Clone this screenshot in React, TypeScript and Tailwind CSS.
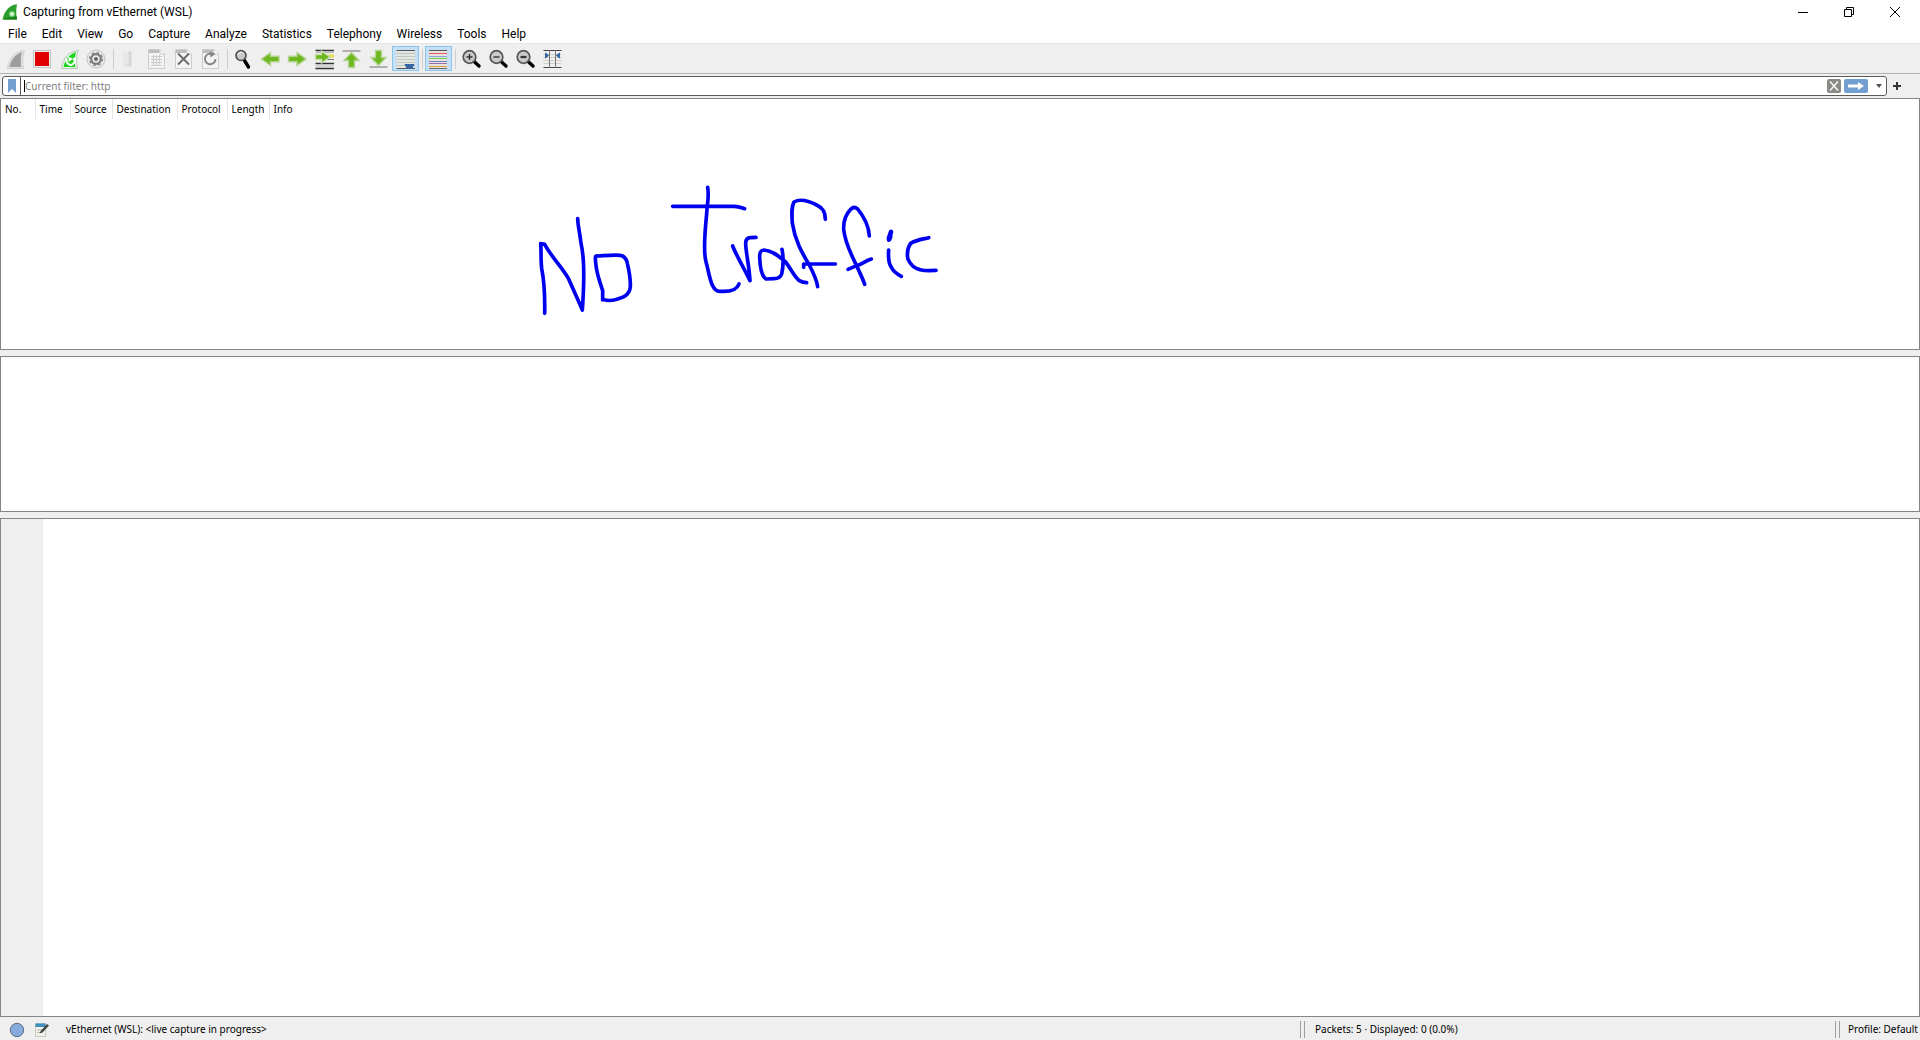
import React from "react";

const menus = ["File", "Edit", "View", "Go", "Capture", "Analyze", "Statistics", "Telephony", "Wireless", "Tools", "Help"];

const columns = [
  { name: "No.", width: "w-[34px]" },
  { name: "Time", width: "w-[35px]" },
  { name: "Source", width: "w-[42px]" },
  { name: "Destination", width: "w-[65px]" },
  { name: "Protocol", width: "w-[50px]" },
  { name: "Length", width: "w-[42px]" },
  { name: "Info", width: "" },
];

function Glyph({ children }: { children: React.ReactNode }) {
  return (
    <svg viewBox="0 0 27 25" className="h-[25px] w-[27px]" fill="none" aria-hidden="true">
      {children}
    </svg>
  );
}

function Fin({ outer, rim, inner }: { outer: string; rim: string; inner: string }) {
  return (
    <>
      <path d="M5.500 22.500C7 12 12.500 5.500 22.500 4.500C20 9.500 20.500 16 21.500 22.500Z" fill={outer} stroke={rim} />
      <path d="M7.500 21C9 13.500 13.500 8 20 6.300C18.500 11 18.500 16 19.300 21Z" fill={inner} />
    </>
  );
}

function Sheet({ children }: { children: React.ReactNode }) {
  return (
    <>
      <path d="M5.500 3.500H17L21.500 8V22.500H5.500Z" fill="#f4f4f4" stroke="#cccccc" />
      <path d="M6 4H16.500V7H6Z" fill="#bdbdbd" />
      <path d="M17 3.500V8H21.500" stroke="#cccccc" fill="#fff" />
      {children}
    </>
  );
}

function Lens({ children }: { children?: React.ReactNode }) {
  return (
    <>
      <path d="M15.500 15L21 20" stroke="#000" strokeWidth="3.400" strokeLinecap="round" />
      <circle cx="11.500" cy="11" r="6.300" fill="#c9c9c9" stroke="#555" strokeWidth="1.700" />
      {children}
    </>
  );
}

type Tool = { label: string; icon?: React.ReactNode; pressed?: boolean; disabled?: boolean };

const tools: (Tool | null)[] = [
  { label: "Start capture", disabled: true, icon: <Fin outer="#e2e2e2" rim="#d0d0d0" inner="#9c9c9c" /> },
  {
    label: "Stop capture",
    icon: (
      <>
        <rect x="4.500" y="4.500" width="17" height="17" fill="#efefef" stroke="#c4c4c4" />
        <rect x="6" y="6" width="14" height="14" fill="#e00000" />
      </>
    ),
  },
  {
    label: "Restart capture",
    icon: (
      <>
        <Fin outer="#e6f8e6" rim="#b4c8b4" inner="#1fd41f" />
        <path d="M11 13a4 4 0 1 0 6.500-1" stroke="#fff" strokeWidth="1.900" />
        <path d="M12.500 10.500L17 13L12.500 16Z" fill="#fff" />
      </>
    ),
  },
  {
    label: "Capture options",
    icon: (
      <>
        <circle cx="13" cy="13" r="9" fill="#e9e9e9" stroke="#c2c2c2" />
        <circle cx="13" cy="13" r="4.800" stroke="#7c7c7c" strokeWidth="2.200" />
        <circle cx="13" cy="13" r="6.400" stroke="#7c7c7c" strokeWidth="1.400" strokeDasharray="2.500 2.500" />
        <circle cx="13" cy="13" r="2" fill="#666" />
      </>
    ),
  },
  null,
  {
    label: "Open",
    disabled: true,
    icon: (
      <>
        <path d="M7 5.500H12.500V20.500H7Z" fill="#e8e8e8" />
        <path d="M12.500 5.500H15.500V20.500H9.500L12.500 18Z" fill="#d6d6d6" />
      </>
    ),
  },
  {
    label: "Save",
    disabled: true,
    icon: (
      <Sheet>
        <path d="M8 10.500H19M8 13.500H19M8 16.500H19M8 19.500H19M10.500 9V20M13.500 9V20M16.500 9V20" stroke="#cccccc" />
      </Sheet>
    ),
  },
  {
    label: "Close",
    icon: (
      <Sheet>
        <path d="M8 7.500L19 18.500M19 7.500L8 18.500" stroke="#6a6a6a" strokeWidth="1.900" />
      </Sheet>
    ),
  },
  {
    label: "Reload",
    icon: (
      <Sheet>
        <path d="M16 8.500a5.300 5.300 0 1 0 2.500 4.500" stroke="#858585" strokeWidth="1.900" />
        <path d="M13 5.500L18.500 8L13.500 11.500Z" fill="#858585" />
      </Sheet>
    ),
  },
  null,
  {
    label: "Find",
    icon: (
      <>
        <path d="M14.500 14.500L18.500 21" stroke="#000" strokeWidth="3.400" strokeLinecap="round" />
        <circle cx="11" cy="9.500" r="5" fill="#c9c9c9" stroke="#4a4a4a" strokeWidth="1.600" />
        <path d="M8.500 8.500a3 3 0 0 1 3-2" stroke="#fff" />
      </>
    ),
  },
  {
    label: "Previous packet",
    icon: <path d="M22 10.300H13.500V6.500L4.500 13L13.500 19.500V15.700H22Z" fill="#6db81f" stroke="#b5d492" strokeWidth="1.400" />,
  },
  {
    label: "Next packet",
    icon: <path d="M4.500 10.300H13V6.500L22 13L13 19.500V15.700H4.500Z" fill="#6db81f" stroke="#b5d492" strokeWidth="1.400" />,
  },
  {
    label: "Go to packet",
    icon: (
      <>
        <path d="M4.500 4.500H23M4.500 17.500H23M4.500 22.500H23" stroke="#333" strokeWidth="1.300" />
        <path d="M5 6.500H23M4.500 20H23" stroke="#b8b8b8" />
        <path d="M13 10H23" stroke="#e8dc4a" strokeWidth="3" />
        <path d="M13 13.500H23" stroke="#777" />
        <path d="M4.500 8.500H10.500V5L19 11L10.500 17V13.500H4.500Z" fill="#6db81f" stroke="#c9dfb0" strokeWidth="1.300" />
      </>
    ),
  },
  {
    label: "First packet",
    icon: (
      <>
        <path d="M4.500 5H22.500" stroke="#b0b0b0" strokeWidth="2" />
        <path d="M10.500 21.500V14.500H6L13.500 6.500L21 14.500H16.500V21.500Z" fill="#6db81f" stroke="#b5d492" strokeWidth="1.400" />
      </>
    ),
  },
  {
    label: "Last packet",
    icon: (
      <>
        <path d="M4.500 21H22.500" stroke="#b0b0b0" strokeWidth="2" />
        <path d="M10.500 4.500V11.500H6L13.500 19.500L21 11.500H16.500V4.500Z" fill="#6db81f" stroke="#b5d492" strokeWidth="1.400" />
      </>
    ),
  },
  {
    label: "Auto-scroll",
    pressed: true,
    icon: (
      <>
        <path d="M4.500 5H23V22H4.500Z" fill="#e4e6e2" />
        <path d="M4.500 4.500H23M4.500 22.500H23" stroke="#555" />
        <path d="M4.500 7.500H23M4.500 10.500H23M4.500 13.500H23M4.500 16.500H23M4.500 19.500H23" stroke="#c0c4c2" />
        <path d="M12.500 18H22.500L20.500 22.500H14.500Z" fill="#3465a4" />
      </>
    ),
  },
  null,
  {
    label: "Colorize packets",
    pressed: true,
    icon: (
      <>
        <path d="M4 4H22V22H4Z" fill="#e9e4e0" />
        <path d="M4 4.500H22" stroke="#555" />
        <path d="M4 7.500H22" stroke="#e05a5a" />
        <path d="M4 10.500H22" stroke="#8aa4e0" />
        <path d="M4 12.500H22" stroke="#6fd24f" />
        <path d="M4 15.500H22" stroke="#6b82c4" />
        <path d="M4 17.500H22" stroke="#9b6bb0" />
        <path d="M4 20.500H22" stroke="#cfa13a" />
        <path d="M4 22.500H22" stroke="#666" />
      </>
    ),
  },
  null,
  { label: "Zoom in", icon: <Lens><path d="M8.500 11H14.500M11.500 8V14" stroke="#333" strokeWidth="1.400" /></Lens> },
  { label: "Zoom out", icon: <Lens><path d="M8.500 11H14.500" stroke="#333" strokeWidth="1.400" /></Lens> },
  { label: "Normal size", icon: <Lens><path d="M8.500 11H14.500" stroke="#333" strokeWidth="2.200" /></Lens> },
  {
    label: "Resize columns",
    icon: (
      <>
        <path d="M4.500 4.500H22.500M4.500 21.500H22.500" stroke="#444" />
        <path d="M4.500 8.500H22.500M4.500 11.500H22.500M4.500 14.500H22.500M4.500 17.500H22.500" stroke="#cdd0c8" />
        <path d="M10.500 4V22M16.500 4V22" stroke="#777" />
        <path d="M6.500 7L9.500 9.500L6.500 12ZM20.500 7L17.500 9.500L20.500 12Z" fill="#3465a4" stroke="#3465a4" />
      </>
    ),
  },
];

function TitleBar() {
  return (
    <header className="flex h-6 items-center bg-white">
      <svg viewBox="0 0 18 18" className="ml-px h-[18px] w-[18px]" aria-hidden="true">
        <path d="M1.500 16.500C3 8.500 8 2 16 1.200C15 6 15 12 16 16.500Z" fill="#2c9e2c" />
        <path d="M2 16.500C7 13 12 16 15.500 13L16 16.500Z" fill="#148014" />
        <circle cx="11" cy="11" r="2.800" fill="#9be09b" />
        <circle cx="11" cy="11" r="1.300" fill="#e9ffe9" />
      </svg>
      <h1 className="ml-1 flex-1 font-[Roboto,sans-serif] text-xs">Capturing from vEthernet (WSL)</h1>
      <button aria-label="Minimize" className="flex h-5 w-[46px] items-center justify-center">
        <svg viewBox="0 0 12 12" className="h-3 w-3" stroke="#000"><path d="M1 6.500H11" /></svg>
      </button>
      <button aria-label="Restore" className="flex h-5 w-[46px] items-center justify-center">
        <svg viewBox="0 0 12 12" className="h-3 w-3" fill="none" stroke="#000"><path d="M1.500 3.500H8.500V10.500H1.500ZM3.500 3.500V1.500H10.500V8.500H8.500" /></svg>
      </button>
      <button aria-label="Close" className="mr-0.5 flex h-5 w-[46px] items-center justify-center">
        <svg viewBox="0 0 12 12" className="h-3 w-3" stroke="#000"><path d="M1 1L11 11M11 1L1 11" /></svg>
      </button>
    </header>
  );
}

function Toolbar() {
  return (
    <div role="toolbar" className="flex h-[31px] items-center border-y border-t-[#e6e6e6] border-b-[#b4b4b4] pl-0.5">
      {tools.map((t, i) =>
        t === null ? (
          <span key={i} className="flex w-1.5 justify-center"><span className="h-5 w-px bg-[#cdcdcd]" /></span>
        ) : (
          <button
            key={i}
            aria-label={t.label}
            disabled={t.disabled}
            aria-pressed={t.pressed}
            className={t.pressed ? "bg-[#c4e0f6] outline outline-1 -outline-offset-1 outline-[#8ec3ea]" : ""}
          >
            <Glyph>{t.icon}</Glyph>
          </button>
        )
      )}
    </div>
  );
}

function FilterBar() {
  return (
    <form className="flex h-6 items-center pl-0.5" onSubmit={(e) => e.preventDefault()}>
      <div className="flex h-5 flex-1 items-center rounded-[3px] border border-[#5c5c5c] bg-white">
        <button type="button" aria-label="Bookmarks" className="flex h-full w-[18px] items-center justify-center border-r border-[#5c5c5c]">
          <svg viewBox="0 0 8 14" className="h-3.5 w-2"><path d="M0 0H8V14L4 10L0 14Z" fill="#729fcf" /></svg>
        </button>
        <span className="ml-[3px] h-3 w-px bg-black" />
        <input
          aria-label="Display filter"
          placeholder="Current filter: http"
          className="h-full min-w-0 flex-1 bg-transparent text-[10px] outline-none placeholder:text-[#808080]"
        />
        <button type="button" aria-label="Clear filter" className="flex h-3.5 w-3.5 items-center justify-center rounded-[2px] bg-[#888a85]">
          <svg viewBox="0 0 14 14" className="h-3.5 w-3.5" stroke="#fff" strokeWidth="1.300"><path d="M3 2.500L11 11.500M11 2.500L3 11.500" /></svg>
        </button>
        <button type="submit" aria-label="Apply filter" className="ml-[3px] rounded-[2px] bg-[#729fcf]">
          <svg viewBox="0 0 24 14" className="h-3.5 w-6"><path d="M4 5.500H14V3L20 7L14 11V8.500H4Z" fill="#fff" /></svg>
        </button>
        <button type="button" aria-label="Filter history" className="flex h-4 w-[18px] items-center justify-end pr-1">
          <svg viewBox="0 0 6 4" className="h-1 w-1.5"><path d="M0 0H6L3 4Z" fill="#555" /></svg>
        </button>
      </div>
      <button type="button" aria-label="Add filter button" className="flex w-5 justify-center">
        <svg viewBox="0 0 8 8" className="h-2 w-2" stroke="#333" strokeWidth="2"><path d="M0 4H8M4 0V8" /></svg>
      </button>
      <span className="w-[13px]" />
    </form>
  );
}

function PacketList() {
  return (
    <section aria-label="Packet list" className="relative flex-[252_1_0px] border border-[#858585] bg-white">
      <table className="w-full table-fixed border-collapse text-left text-[10px]">
        <thead>
          <tr className="h-5">
            {columns.map((c) => (
              <th key={c.name} scope="col" className={`${c.width} border-r border-[#e5e5e5] p-0 pl-1 font-normal last:border-r-0`}>
                {c.name}
              </th>
            ))}
          </tr>
        </thead>
      </table>
      <svg
        role="img"
        aria-label="Handwritten note: No traffic"
        viewBox="0 0 1320 480"
        className="absolute top-[71px] left-[519px] h-[160px] w-[440px]"
        fill="none"
        stroke="#0000f0"
        strokeWidth="11"
        strokeLinecap="round"
        strokeLinejoin="round"
      >
        <path d="M74 430C75 380 72 330 65 295C62 270 64 240 62 221L74 223C95 262 125 290 145 325C160 360 175 390 187 420C192 350 195 270 183 220C179 185 174 170 173 146" />
        <path d="M248 390V362C238 330 226 305 226 262Q226 256 236 258C265 256 285 254 300 256Q318 258 322 280C328 305 332 325 331 350Q330 370 312 380C290 390 268 396 250 388" />
        <path d="M563 52C568 80 562 95 560 130C556 180 548 240 558 275C568 310 572 365 600 364C630 366 650 362 657 342" />
        <path d="M458 109H640C655 108 662 112 674 116" />
        <path d="M638 228C648 255 670 290 690 332C688 290 678 250 677 222Q676 204 692 203L708 202" />
        <path d="M786 238C792 270 790 290 785 312Q780 326 762 326L738 327C724 318 720 290 719 262Q718 240 732 240C760 242 780 262 797 276C812 295 822 320 838 332Q848 338 860 338" />
        <path d="M916 148C916 122 905 112 890 105C865 92 840 86 822 96C814 110 815 130 817 160C825 215 850 255 868 285C882 312 890 330 893 350" />
        <path d="M851 292V282H946" />
        <path d="M1048 198C1046 165 1028 135 1012 116Q1002 108 992 118C976 135 970 155 971 178C976 225 1000 265 1012 292C1020 310 1028 325 1034 343" />
        <path d="M984 298L1010 287C1028 282 1036 272 1054 267" />
        <path d="M1113 186L1107 204V209L1111 200" strokeWidth="14" />
        <path d="M1106 240C1104 265 1106 280 1114 292C1120 305 1130 312 1144 319" />
        <path d="M1226 203C1205 208 1188 210 1172 220C1162 235 1160 250 1164 268C1172 285 1182 296 1200 299C1218 303 1230 302 1248 301" />
      </svg>
    </section>
  );
}

function Grip() {
  return <span className="h-[17px] w-[5px] border-x border-[#a0a0a0]" />;
}

function StatusBar() {
  return (
    <footer className="flex h-[23px] items-center pt-0.5 text-[10px]">
      <div className="flex min-w-0 flex-[1300_1_0px] items-center">
        <button aria-label="Expert information" className="ml-[9px]">
          <svg viewBox="0 0 16 16" className="h-4 w-4"><circle cx="8" cy="8" r="6.700" fill="#86abdc" stroke="#5f6b80" /></svg>
        </button>
        <button aria-label="Capture file comment" className="ml-[9px]">
          <svg viewBox="0 0 16 16" className="h-4 w-4">
            <path d="M1.500 1.500H11.500V14.500H1.500Z" fill="#f3f3ee" stroke="#c8c8c0" />
            <path d="M1.500 1.500H11.500V5H1.500Z" fill="#3f8fc0" />
            <path d="M3 8H9M3 10.500H8" stroke="#b5b5a8" />
            <path d="M5.500 11.500L7 8.500L13 2L15 3.500L8.500 10.500Z" fill="#444" />
          </svg>
        </button>
        <span className="ml-4">vEthernet (WSL): &lt;live capture in progress&gt;</span>
      </div>
      <Grip />
      <span className="flex-[520_1_0px] pl-2.5">Packets: 5 · Displayed: 0 (0.0%)</span>
      <Grip />
      <span className="w-20 pl-2 whitespace-nowrap">Profile: Default</span>
    </footer>
  );
}

export default function App() {
  return (
    <div className="flex min-h-screen flex-col bg-[#efefef] font-['Noto_Sans',sans-serif] text-black">
      <TitleBar />
      <nav className="flex h-[19px] items-center gap-[15px] bg-white pl-2 font-[Roboto,sans-serif] text-xs">
        {menus.map((m) => (
          <button key={m}>{m}</button>
        ))}
      </nav>
      <Toolbar />
      <FilterBar />
      <main className="flex flex-1 flex-col gap-1.5">
        <PacketList />
        <section aria-label="Packet details" className="flex-[155_1_0px] border border-[#858585] bg-white" />
        <section aria-label="Packet bytes" className="flex flex-[501_1_0px] border border-[#858585] bg-white">
          <div className="w-[42px] bg-[#efefef]" />
        </section>
      </main>
      <StatusBar />
    </div>
  );
}
